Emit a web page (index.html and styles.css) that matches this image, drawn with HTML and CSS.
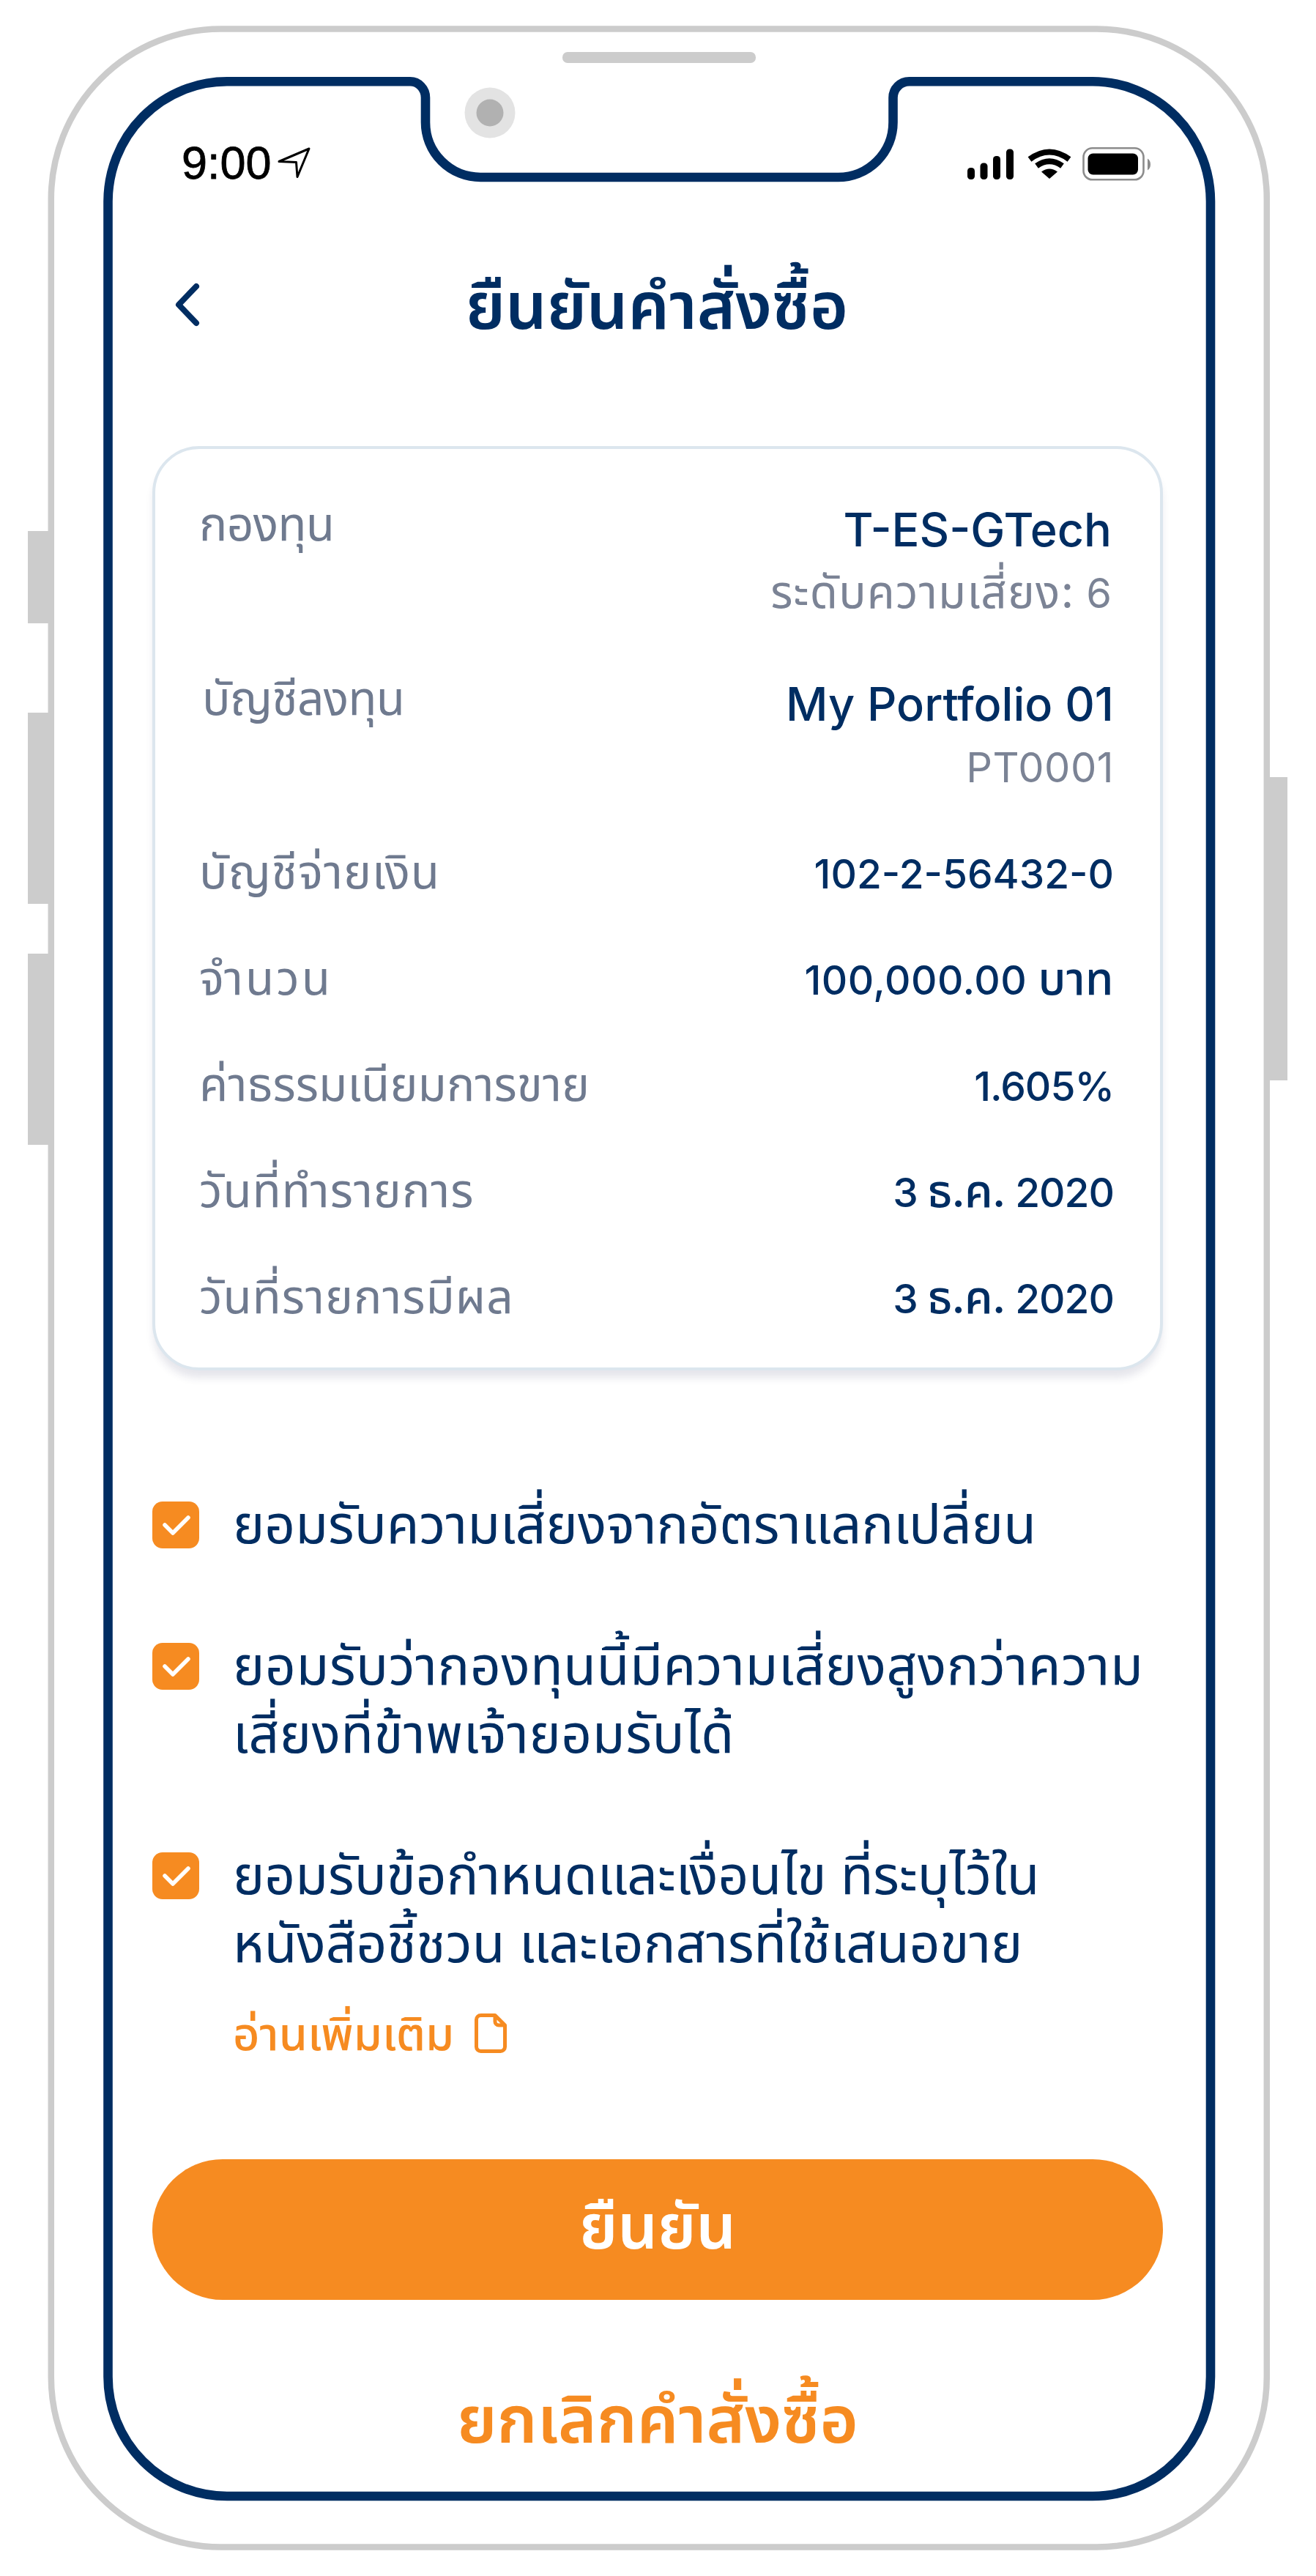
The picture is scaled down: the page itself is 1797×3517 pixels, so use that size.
FILE: index.html
```html
<!DOCTYPE html>
<html lang="th">
<head>
    <meta charset="utf-8">
    <title>ยืนยันคำสั่งซื้อ</title>
    <link rel="stylesheet" href="styles.css">
</head>
<body>
    <div class="phone">
        <!-- Phone outline, side buttons, speaker, camera and notch -->
        <svg class="phone-frame" viewBox="0 0 1797 3517" fill="none" aria-hidden="true">
            <path fill="#ccc" d="M38 725h28v126H38zM38 973h28v261H38zM38 1302h28v261H38zM1734 1061h24v414h-24z"/>
            <rect x="69.8" y="39.5" width="1660" height="3438" rx="232" stroke="#ccc" stroke-width="8.5"/>
            <rect x="768" y="71" width="264" height="15" rx="7" fill="#ccc"/>
            <circle cx="669" cy="154" r="34.5" fill="#e3e3e3"/>
            <circle cx="669" cy="154" r="18.5" fill="#b1b1b1"/>
            <path stroke="#002d62" stroke-width="12.6" d="M310 111.300H560a21 22 0 0 1 21 22V167a75 75 0 0 0 75 75H1144a75 75 0 0 0 75.500-75V133.300a22 22 0 0 1 22-22H1492A161 164 0 0 1 1653 275V3245A161 163 0 0 1 1492 3408H310A162.500 163 0 0 1 147.500 3245V275A162.500 164 0 0 1 310 111.300Z"/>
        </svg>

        <div class="screen">
            <div class="status-bar">
                <div class="status-left">
                    <span>9:00</span>
                    <svg class="location-icon" viewBox="0 0 46 46" fill="none" stroke="#000" stroke-width="3" stroke-linejoin="round">
                        <path d="M2 21.500 43 4 27 42.500 25.500 22.500Z"/>
                    </svg>
                </div>
                <svg class="status-icons" viewBox="0 0 252 48">
                    <rect x="1" y="30" width="10" height="16" rx="4.500"/>
                    <rect x="18.500" y="23.500" width="10" height="22.500" rx="4.500"/>
                    <rect x="36" y="14" width="10" height="32" rx="4.500"/>
                    <rect x="54" y="4.500" width="10" height="41.500" rx="4.500"/>
                    <path fill="none" stroke="#000" stroke-width="8" d="M86 18.500Q113-1.500 140 18.500M95.500 27.500Q113 15 130.500 27.500"/>
                    <path d="M102 35.500Q113 27.500 124 35.500L113 45Z"/>
                    <rect x="159.500" y="3.300" width="82" height="43" rx="12" fill="none" stroke="#8c8c8c" stroke-width="2.600"/>
                    <rect x="165.500" y="10.500" width="68.500" height="29" rx="7"/>
                    <path fill="#8c8c8c" d="M247 17.500q4 2.500 4 8t-4 8z"/>
                </svg>
            </div>

            <div class="header">
                <svg class="back-icon" viewBox="0 0 40 64" fill="none" stroke="#002d62" stroke-width="8" stroke-linecap="round" stroke-linejoin="round">
                    <path d="M32 6 8 31 32 56"/>
                </svg>
                <h1>ยืนยันคำสั่งซื้อ</h1>
            </div>

            <div class="card">
                <div class="row row-tall">
                    <div class="label label-tight">กองทุน</div>
                    <div class="value-group value-inset">
                        <div class="value-main">T-ES-GTech</div>
                        <div class="value-sub"><span class="thai-sub">ระดับความเสี่ยง:</span> 6</div>
                    </div>
                </div>
                <div class="row row-tall">
                    <div class="label label-tight label-indent">บัญชีลงทุน</div>
                    <div class="value-group">
                        <div class="value-main">My Portfolio 01</div>
                        <div class="value-sub value-wide">PT0001</div>
                    </div>
                </div>
                <div class="row">
                    <div class="label">บัญชีจ่ายเงิน</div>
                    <div class="value">102-2-56432-0</div>
                </div>
                <div class="row">
                    <div class="label label-wide">จำนวน</div>
                    <div class="value value-wide">100,000.00 <span class="thai">บาท</span></div>
                </div>
                <div class="row">
                    <div class="label label-fee">ค่าธรรมเนียมการขาย</div>
                    <div class="value value-tight">1.605%</div>
                </div>
                <div class="row">
                    <div class="label">วันที่ทำรายการ</div>
                    <div class="value value-tight">3 <span class="thai">ธ.ค.</span> 2020</div>
                </div>
                <div class="row">
                    <div class="label">วันที่รายการมีผล</div>
                    <div class="value value-tight">3 <span class="thai">ธ.ค.</span> 2020</div>
                </div>
            </div>

            <div class="consents">
                <div class="consent">
                    <svg class="checkbox" viewBox="0 0 64 64"><rect width="64" height="64" rx="14" fill="#f68b21"/><path d="M17 32 28 43 49 22" fill="none" stroke="#fff" stroke-width="5.500" stroke-linecap="round" stroke-linejoin="round"/></svg>
                    <div class="consent-text">ยอมรับความเสี่ยงจากอัตราแลกเปลี่ยน</div>
                </div>
                <div class="consent">
                    <svg class="checkbox" viewBox="0 0 64 64"><rect width="64" height="64" rx="14" fill="#f68b21"/><path d="M17 32 28 43 49 22" fill="none" stroke="#fff" stroke-width="5.500" stroke-linecap="round" stroke-linejoin="round"/></svg>
                    <div class="consent-text consent-wide">ยอมรับว่ากองทุนนี้มีความเสี่ยงสูงกว่าความ<br>เสี่ยงที่ข้าพเจ้ายอมรับได้</div>
                </div>
                <div class="consent">
                    <svg class="checkbox" viewBox="0 0 64 64"><rect width="64" height="64" rx="14" fill="#f68b21"/><path d="M17 32 28 43 49 22" fill="none" stroke="#fff" stroke-width="5.500" stroke-linecap="round" stroke-linejoin="round"/></svg>
                    <div class="consent-text">
                        ยอมรับข้อกำหนดและเงื่อนไข ที่ระบุไว้ใน<br>หนังสือชี้ชวน และเอกสารที่ใช้เสนอขาย
                        <a class="read-more">อ่านเพิ่มเติม
                            <svg class="file-icon" viewBox="0 0 44 54" fill="none" stroke="#f68b21" stroke-width="5" stroke-linejoin="round">
                                <path d="M8 2.500H28L41.500 16V45.500a6 6 0 0 1-6 6H8.500a6 6 0 0 1-6-6V8.500a6 6 0 0 1 6-6M28 2.500V11a5 5 0 0 0 5 5h8.500"/>
                            </svg>
                        </a>
                    </div>
                </div>
            </div>

            <button class="btn btn-primary">ยืนยัน</button>
            <button class="btn btn-link">ยกเลิกคำสั่งซื้อ</button>
        </div>
    </div>
</body>
</html>
```
FILE: styles.css
```css
* {
    box-sizing: border-box;
}

body {
    margin: 0;
    background: #fff;
    color: #002d62;
    font-family: Inter, "Noto Sans Thai", "Noto Sans", sans-serif;
}

.phone {
    position: relative;
    width: 1797px;
    height: 3517px;
    overflow: hidden;
}

.phone-frame {
    position: absolute;
    inset: 0;
    width: 100%;
    height: 100%;
}

.screen {
    position: relative;
    display: flex;
    flex-direction: column;
    padding: 182px 209px 0 208px;
    white-space: nowrap;
}

/* Status bar */
.status-bar {
    display: flex;
    justify-content: space-between;
    align-items: center;
    height: 80px;
    padding: 0 16px 0 40px;
}

.status-left {
    display: flex;
    align-items: center;
    gap: 8px;
    color: #000;
    font-family: "Liberation Sans", Arial, sans-serif;
    font-size: 63px;
    line-height: 80px;
    -webkit-text-stroke: 0.8px #000;
}

.location-icon {
    width: 46px;
    height: 46px;
}

.status-icons {
    width: 252px;
    height: 48px;
    margin-top: 1px;
}

/* Header */
.header {
    display: grid;
    grid-template-columns: 60px 1fr 60px;
    align-items: center;
    height: 120px;
    margin-top: 95px;
    padding: 0 30px 0 28px;
}

.back-icon {
    width: 40px;
    height: 64px;
}

.header h1 {
    margin: 0;
    font-size: 89px;
    font-weight: 600;
    line-height: 120px;
    text-align: center;
}

/* Order summary */
.card {
    display: flex;
    flex-direction: column;
    gap: 65px;
    height: 1262px;
    margin-top: 132px;
    padding: 62px 63px 0 60px;
    border: 4px solid #dce6ee;
    border-radius: 64px;
    background: #fff;
    box-shadow: 0 12px 12px -2px rgba(40, 40, 90, 0.12);
}

.row {
    display: flex;
    justify-content: space-between;
    align-items: baseline;
    height: 80px;
}

.row-tall {
    align-items: flex-start;
    height: 172.5px;
}

.label {
    color: #6f7a8f;
    font-size: 64px;
    line-height: 80px;
    letter-spacing: 1px;
}

.label-tight {
    letter-spacing: -0.7px;
}

.label-wide {
    letter-spacing: 3px;
}

.label-fee {
    letter-spacing: 0.1px;
}

.label-indent {
    padding-left: 4px;
}

.value-group {
    margin-top: 4px;
    text-align: right;
}

.value-inset {
    padding-right: 3px;
}

.value-main {
    font-size: 63px;
    font-weight: 500;
    line-height: 88px;
}

.value-sub {
    color: #7b8395;
    font-size: 56px;
    line-height: 86px;
}

.value {
    font-size: 55px;
    font-weight: 500;
    line-height: 80px;
}

.value-wide {
    letter-spacing: 0.5px;
}

.value-tight {
    letter-spacing: -1px;
}

.thai,
.thai-sub {
    font-size: 62px;
    line-height: 1;
}

.thai-sub {
    letter-spacing: 1.2px;
}

/* Consents */
.consents {
    display: flex;
    flex-direction: column;
    gap: 100px;
    margin-top: 163px;
}

.consent {
    display: flex;
    gap: 46px;
}

.checkbox {
    flex: none;
    width: 64px;
    height: 64px;
    margin-top: 16px;
}

.consent-text {
    font-size: 73px;
    font-weight: 450;
    line-height: 93px;
}

.consent-wide {
    letter-spacing: 0.6px;
}

.read-more {
    display: flex;
    align-items: center;
    gap: 28px;
    margin-top: 37px;
    color: #f68b21;
    font-size: 63px;
    font-weight: 500;
    line-height: 80px;
}

.file-icon {
    width: 44px;
    height: 54px;
}

/* Buttons */
.btn {
    border: none;
    background: none;
    font-family: inherit;
    font-weight: 600;
    cursor: pointer;
}

.btn-primary {
    height: 192px;
    margin-top: 132px;
    padding: 0;
    border-radius: 96px;
    background: #f68b21;
    color: #fff;
    font-size: 86px;
}

.btn-link {
    height: 120px;
    margin-top: 103px;
    padding: 0;
    color: #f68b21;
    font-size: 89.5px;
    line-height: 120px;
}
```
